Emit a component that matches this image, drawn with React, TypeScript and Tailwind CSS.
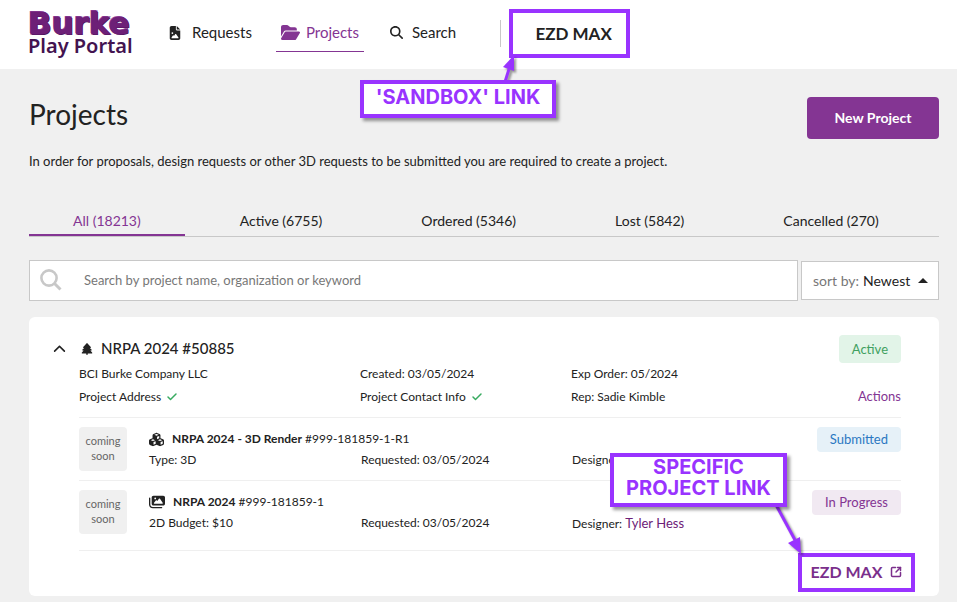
import { useState } from 'react';
import type { ReactNode } from 'react';
import clsx from 'clsx';
import { FaChevronUp, FaCubes, FaFileImage, FaFolderOpen, FaImages, FaMagnifyingGlass, FaTree } from 'react-icons/fa6';
import { Check, SquareArrowOutUpRight } from 'lucide-react';

interface ProjectRequest {
  name: string;
  number: string;
  detail: string;
  requested: string;
  designer?: string;
  status: string;
  statusClass: string;
  icon: ReactNode;
}

const tabs = [
  { label: 'All', count: 18213 },
  { label: 'Active', count: 6755 },
  { label: 'Ordered', count: 5346 },
  { label: 'Lost', count: 5842 },
  { label: 'Cancelled', count: 270 },
];

const requests: ProjectRequest[] = [
  {
    name: 'NRPA 2024 - 3D Render',
    number: '#999-181859-1-R1',
    detail: 'Type: 3D',
    requested: '03/05/2024',
    status: 'Submitted',
    statusClass: 'bg-[#e6f1f8] text-[#2b78c2]',
    icon: <FaCubes className="size-[15px] shrink-0" />,
  },
  {
    name: 'NRPA 2024',
    number: '#999-181859-1',
    detail: '2D Budget: $10',
    requested: '03/05/2024',
    designer: 'Tyler Hess',
    status: 'In Progress',
    statusClass: 'bg-[#f1e9f2] text-[#843593]',
    icon: <FaImages className="size-4 shrink-0" />,
  },
];

function Header() {
  return (
    <header className="flex h-[69px] items-start bg-white pl-7">
      <a href="#home" className="mt-[10px] block w-[108px] whitespace-nowrap">
        <span className="block h-[26px] font-['DejaVu_Sans'] text-[31px] leading-[26px] font-bold text-[#6d2077] [-webkit-text-stroke:1px_#6d2077] [text-shadow:1px_1px_0_#4a1259,-1px_-1px_0_#9a4fa8]">
          Burke
        </span>
        <span className="block font-['Noto_Sans'] text-xl leading-5 font-semibold text-[#431350]">Play Portal</span>
      </a>

      <nav className="flex items-start text-[15px]">
        <a href="#requests" className="ml-8 flex h-[52px] items-center gap-[10px] pt-[13px]">
          <FaFileImage className="size-[14px]" />
          Requests
        </a>
        <a
          href="#projects"
          className="ml-6 flex h-[52px] items-center gap-[6px] border-b border-[#843593] px-[5px] pt-[13px] text-[#843593]"
        >
          <FaFolderOpen className="size-[19px]" />
          Projects
        </a>
        <a href="#search" className="ml-[26px] flex h-[52px] items-center gap-[9px] pt-[13px]">
          <FaMagnifyingGlass className="size-[13px]" />
          Search
        </a>
      </nav>

      <div className="mt-5 ml-11 h-[27px] w-px bg-[#c8c8c8]" />
      <a
        href="#ezd-max"
        className="mt-[9px] ml-2 flex h-[49px] w-[121px] items-center justify-center border-4 border-[#9933ff] pl-2 text-[17px] font-bold"
      >
        EZD MAX
      </a>
    </header>
  );
}

function RequestRow({ request }: { request: ProjectRequest }) {
  return (
    <li className="flex h-[63px] items-start border-t border-[#efefef] pt-[9px]">
      <div className="flex h-11 w-12 shrink-0 items-center justify-center rounded bg-[#f0f0f0] pb-[3px] text-center text-[11px] leading-[15px] text-[#666]">
        coming
        <br />
        soon
      </div>
      <div className="ml-[22px] w-[212px] shrink-0 pt-[2px]">
        <div className="flex h-5 items-center gap-2 text-xs whitespace-nowrap">
          {request.icon}
          <span>
            <strong className="font-bold">{request.name}</strong> {request.number}
          </span>
        </div>
        <p className="leading-[22px]">{request.detail}</p>
      </div>
      <p className="w-[211px] shrink-0 pt-[21px] leading-6">Requested: {request.requested}</p>
      <p className="pt-[21px] leading-6 whitespace-nowrap">
        Designer:{' '}
        {request.designer && (
          <a href="#designer" className="text-[13px] text-[#6d2077]">{request.designer}</a>
        )}
      </p>
      <span className={clsx('ml-auto rounded px-[13px] text-[13px] leading-[25px] whitespace-nowrap', request.statusClass)}>
        {request.status}
      </span>
    </li>
  );
}

function ProjectCard() {
  return (
    <article className="mt-4 h-[279px] rounded-md bg-white pr-[38px] pl-[50px] text-xs">
      <div className="relative flex h-[45px] items-end pb-px">
        <button type="button" aria-label="Collapse project" className="absolute bottom-[6px] -left-[26px]">
          <FaChevronUp className="size-[13px]" />
        </button>
        <h2 className="flex h-6 items-center gap-2 pl-[2px] text-[15px] font-medium">
          <FaTree className="size-3" />
          NRPA 2024 #50885
        </h2>
        <span className="mb-[-2px] ml-auto rounded bg-[#e2f4e8] px-[13px] text-[13px] leading-7 text-[#3fa060]">Active</span>
      </div>

      <div className="grid grid-cols-[281px_211px_1fr] leading-[23px]">
        <p>BCI Burke Company LLC</p>
        <p>Created: 03/05/2024</p>
        <p>Exp Order: 05/2024</p>
        <p className="flex items-center gap-[5px]">
          Project Address <Check className="size-3 text-[#38ab60]" strokeWidth={3} />
        </p>
        <p className="flex items-center gap-[5px]">
          Project Contact Info <Check className="size-3 text-[#38ab60]" strokeWidth={3} />
        </p>
        <div className="flex justify-between">
          <p>Rep: Sadie Kimble</p>
          <button type="button" className="text-[13px] text-[#843593]">Actions</button>
        </div>
      </div>

      <ul className="mt-[9px] border-b border-[#efefef] pb-[7px]">
        {requests.map((request) => (
          <RequestRow key={request.number} request={request} />
        ))}
      </ul>

      <a
        href="#project-ezd-max"
        className="mt-[2px] -mr-[14px] ml-auto flex h-[39px] w-[117px] items-center justify-center gap-2 border-4 border-[#9933ff] pb-[2px] text-base font-bold text-[#7b2f8c]"
      >
        EZD MAX
        <SquareArrowOutUpRight className="size-3" strokeWidth={3} />
      </a>
    </article>
  );
}

function Callout({ className, children }: { className: string; children: ReactNode }) {
  return (
    <div
      className={clsx(
        "absolute flex items-center justify-center border-4 border-[#9933ff] bg-white pb-1 text-center font-['Inter'] text-xl leading-[21px] font-bold text-[#9933ff] uppercase shadow-[3px_3px_3px_rgba(0,0,0,0.4)]",
        className,
      )}
    >
      {children}
    </div>
  );
}

function Annotations() {
  return (
    <>
      <svg className="pointer-events-none absolute top-0 left-0 h-[602px] w-[957px] drop-shadow-[2px_2px_1px_rgba(0,0,0,0.4)]" viewBox="0 0 957 602" fill="#9933ff">
        <path d="M505 82L509 69" stroke="#9933ff" strokeWidth="3" />
        <path d="M514 55L503 67L514 71Z" />
        <path d="M775 503L795 540" stroke="#9933ff" strokeWidth="3" />
        <path d="M801 554L788 543L800 537Z" />
      </svg>
      <Callout className="top-20 left-[360px] h-[38px] w-[196px]">'Sandbox' link</Callout>
      <Callout className="top-[453px] left-[610px] h-[54px] w-[177px]">
        Specific
        <br />
        project link
      </Callout>
    </>
  );
}

export default function App() {
  const [activeTab, setActiveTab] = useState('All');
  const [query, setQuery] = useState('');

  return (
    <div className="relative min-h-screen bg-[#f0f0f0] font-['Lato','Liberation_Sans',sans-serif] text-[#222]">
      <Header />

      <main className="pr-[18px] pb-[6px] pl-[29px]">
        <div className="flex items-center justify-between pt-7">
          <h1 className="pb-2 text-[28px] leading-[34px]">Projects</h1>
          <button type="button" className="h-[42px] w-[132px] rounded bg-[#843593] text-sm font-bold text-white">
            New Project
          </button>
        </div>
        <p className="mt-3 text-[13px] leading-5">
          In order for proposals, design requests or other 3D requests to be submitted you are required to create a project.
        </p>

        <div className="mt-8 flex gap-[11px] border-b border-[#c8c8c8]">
          {tabs.map((tab) => (
            <button
              key={tab.label}
              type="button"
              onClick={() => setActiveTab(tab.label)}
              className={clsx(
                'h-[33px] border-b-2 px-11 pt-[4px] text-sm whitespace-nowrap',
                activeTab === tab.label ? 'border-[#843593] text-[#843593]' : 'border-transparent',
              )}
            >
              {tab.label} ({tab.count})
            </button>
          ))}
        </div>

        <div className="mt-[23px] flex items-center gap-[3px]">
          <label className="flex h-[41px] flex-1 items-center border border-[#c8c8c8] bg-white pl-[10px]">
            <svg className="size-6 text-[#c8c8c8]" viewBox="0 0 24 24" fill="none" stroke="currentColor" strokeWidth="2.6">
              <circle cx="9" cy="9" r="7.6" />
              <path d="M14.5 14.5L20.5 20.5" strokeWidth="3" />
            </svg>
            <input
              type="text"
              value={query}
              onChange={(e) => setQuery(e.target.value)}
              placeholder="Search by project name, organization or keyword"
              aria-label="Search projects"
              className="ml-5 flex-1 text-[13px] outline-none placeholder:text-[#777]"
            />
          </label>
          <button type="button" className="flex h-[39px] w-[138px] items-center border border-[#c8c8c8] bg-white pl-[11px] text-sm">
            <span className="text-[#777]">sort by:</span>
            <span className="ml-1">Newest</span>
            <svg className="ml-2 h-[5px] w-[10px]" viewBox="0 0 10 5" fill="currentColor">
              <path d="M5 0L10 5H0Z" />
            </svg>
          </button>
        </div>

        <ProjectCard />
      </main>

      <Annotations />
    </div>
  );
}
